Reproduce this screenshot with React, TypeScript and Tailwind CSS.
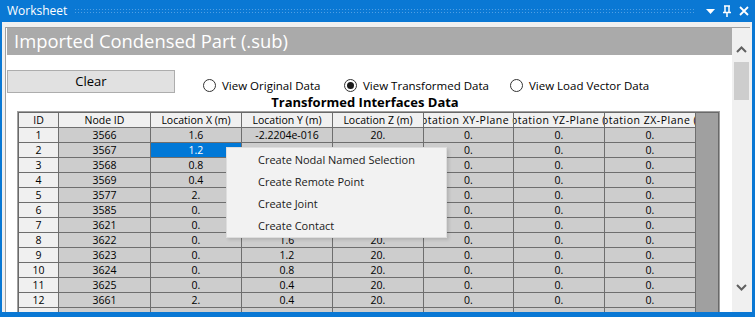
import React from "react";

const rows = [
  ["1", "3566", "1.6", "-2.2204e-016", "20."],
  ["2", "3567", "1.2", "", ""],
  ["3", "3568", "0.8", "", ""],
  ["4", "3569", "0.4", "", ""],
  ["5", "3577", "2.", "", ""],
  ["6", "3585", "0.", "", ""],
  ["7", "3621", "0.", "", ""],
  ["8", "3622", "0.", "1.6", "20."],
  ["9", "3623", "0.", "1.2", "20."],
  ["10", "3624", "0.", "0.8", "20."],
  ["11", "3625", "0.", "0.4", "20."],
  ["12", "3661", "2.", "0.4", "20."],
  ["13", "", "", "", ""],
];

const widths = [
  "w-[40px]",
  "w-[92px]",
  "w-[91px]",
  "w-[91px]",
  "w-[91px]",
  "w-[90px]",
  "w-[91px]",
  "w-[91px]",
];

const headers = [
  "ID",
  "Node ID",
  "Location X (m)",
  "Location Y (m)",
  "Location Z (m)",
  "Rotation XY-Plane (deg)",
  "Rotation YZ-Plane (deg)",
  "Rotation ZX-Plane (deg)",
];

const menuItems = [
  "Create Nodal Named Selection",
  "Create Remote Point",
  "Create Joint",
  "Create Contact",
];

function Radio({ checked, label, w }: { checked?: boolean; label: string; w: string }) {
  return (
    <div className={`${w} flex items-center`}>
      <span className="w-[13px] h-[13px] rounded-full border border-[#333333] bg-white flex items-center justify-center">
        {checked && <span className="w-[7px] h-[7px] rounded-full bg-[#1a1a1a]" />}
      </span>
      <span className="ml-[6px] text-[11.5px] text-black leading-none">{label}</span>
    </div>
  );
}

function Chevron({ up }: { up?: boolean }) {
  return (
    <svg width="11" height="7" viewBox="0 0 11 7">
      <polyline
        points={up ? "1,6 5.5,1.5 10,6" : "1,1 5.5,5.5 10,1"}
        fill="none"
        stroke="#606060"
        strokeWidth="2"
      />
    </svg>
  );
}

export default function App() {
  return (
    <div className="relative w-[755px] h-[317px] overflow-hidden bg-[#0a78d4] flex flex-col pl-[2px] pr-[3px] pb-[5px] font-['Open_Sans',sans-serif]">
      {/* title bar */}
      <div className="h-[22px] flex items-center shrink-0">
        <span className="ml-[5px] text-white text-[12px] leading-none">Worksheet</span>
        <div className="flex-1 h-[6px] ml-[7px] mr-[10px] bg-[radial-gradient(circle,#4f9fe4_0.7px,transparent_1px)] bg-[length:3px_3px]" />
        <svg width="9" height="5" viewBox="0 0 9 5" className="mr-[8px] mt-[1px]">
          <polygon points="0,0 9,0 4.5,5" fill="white" />
        </svg>
        <svg width="8" height="12" viewBox="0 0 8 12" className="mr-[8px]">
          <path d="M1 1 H7 M2 1 V7 M6 1 V7 M0 7.5 H8 M4 7.5 V12" stroke="white" strokeWidth="1.5" fill="none" />
        </svg>
        <svg width="10" height="10" viewBox="0 0 10 10" className="mr-[3px]">
          <path d="M1 1 L9 9 M9 1 L1 9" stroke="white" strokeWidth="1.8" />
        </svg>
      </div>

      {/* body */}
      <div className="flex-1 min-h-0 bg-[#f0f0f0] pl-[3px] pt-[5px] pr-[2px] flex flex-col">
        <div className="flex-1 min-h-0 border-l border-t border-[#a0a0a0] bg-white flex">
          <div className="flex-1 min-w-0 pl-px flex flex-col overflow-hidden">
            <div className="h-[27px] shrink-0 bg-[#aaaaaa] flex items-center pl-[7px]">
              <span className="text-white text-[18.4px] leading-none">Imported Condensed Part (.sub)</span>
            </div>

            <div className="flex items-start mt-[15px] shrink-0">
              <div className="w-[168px] h-[23px] bg-[#e1e1e1] border border-[#adadad] flex items-center justify-center text-[13px] text-black">
                Clear
              </div>
              <div className="flex ml-[28px] mt-[9px]">
                <Radio label="View Original Data" w="w-[141px]" />
                <Radio checked label="View Transformed Data" w="w-[166px]" />
                <Radio label="View Load Vector Data" w="w-[200px]" />
              </div>
            </div>

            <div className="h-[18px] shrink-0 pt-px pr-[9px] flex items-center justify-center text-[13px] font-bold text-black leading-none">
              Transformed Interfaces Data
            </div>

            {/* table */}
            <div className="ml-[10px] w-[703px] shrink-0 border-t border-l border-r border-[#a0a0a0]">
              <div className="border-t border-l border-r border-[#696969] bg-[#a0a0a0] text-[10.5px] text-black">
                <div className="flex">
                  {headers.map((h, i) => (
                    <div
                      key={h}
                      className={`${widths[i]} h-[15px] pt-[2px] shrink-0 border-r border-b border-[#6e6e6e] bg-[#f0f0f0] flex items-center overflow-hidden whitespace-nowrap ${i >= 5 ? "justify-start" : "justify-center"}`}
                    >
                      <span className={i >= 5 ? "ml-[-10px] shrink-0 tracking-[0.5px]" : ""}>{h}</span>
                    </div>
                  ))}
                </div>
                {rows.map((r) => (
                  <div key={r[0]} className="flex">
                    {widths.map((w, i) => {
                      const text = i < 5 ? r[i] : r[0] === "13" ? "" : "0.";
                      const selected = r[0] === "2" && i === 2;
                      const bg = selected ? "bg-[#0078d7] text-white" : i === 0 ? "bg-[#f0f0f0]" : "bg-[#cdcdcd]";
                      return (
                        <div
                          key={i}
                          className={`${w} h-[15px] pt-[2px] shrink-0 border-r border-b border-[#6e6e6e] flex items-center justify-center whitespace-nowrap overflow-hidden ${bg}`}
                        >
                          {r[0] === "13" && i === 0 ? "" : text}
                        </div>
                      );
                    })}
                  </div>
                ))}
              </div>
            </div>
          </div>

          {/* scrollbar */}
          <div className="w-[18px] shrink-0 bg-[#f0f0f0] flex flex-col items-center">
            <div className="h-[17px] mt-[13px] flex items-center justify-center">
              <Chevron up />
            </div>
            <div className="w-[15px] h-[38px] mt-[4px] bg-[#cdcdcd]" />
            <div className="flex-1" />
            <div className="h-[17px] mb-[16px] flex items-center justify-center">
              <Chevron />
            </div>
          </div>
        </div>
      </div>

      {/* context menu */}
      <div className="absolute left-[226px] top-[147px] w-[221px] h-[91px] bg-[#f2f2f2] border border-[#dedede] shadow-[2px_2px_3px_rgba(0,0,0,0.12)] pt-px">
        {menuItems.map((m) => (
          <div key={m} className="h-[22px] pl-[31px] flex items-center text-[11px] text-[#1a1a1a]">
            {m}
          </div>
        ))}
      </div>
    </div>
  );
}
